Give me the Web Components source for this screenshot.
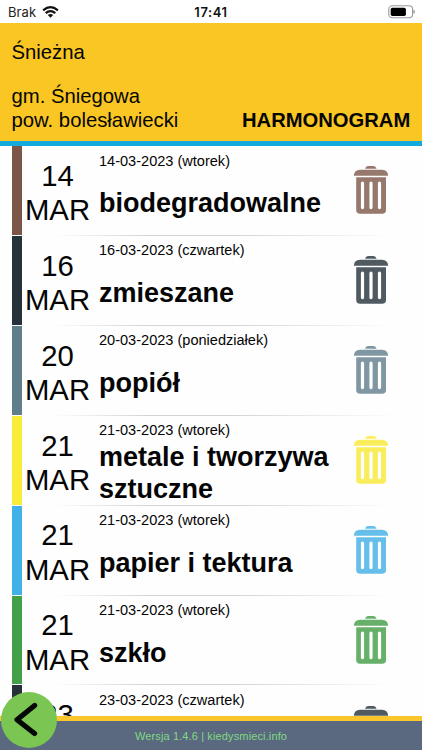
<!DOCTYPE html>
<html lang="pl">
<head>
<meta charset="utf-8">
<title>Harmonogram</title>
<style>
html,body{margin:0;height:100%;overflow:hidden;background:#fefefe;color:#050505;font-family:"Liberation Sans",Arial,sans-serif}
</style>
</head>
<body>
<schedule-app></schedule-app>
<script>
const define = (name, html, setup) => customElements.define(name, class extends HTMLElement {
  connectedCallback() {
    if (this.shadowRoot) return;
    const root = this.attachShadow({mode: 'open'});
    const t = document.createElement('template');
    t.innerHTML = html;
    root.append(t.content.cloneNode(true));
    if (setup) setup(this, root);
  }
});

define('status-bar', `
<style>
:host{display:grid;grid-template-columns:1fr auto 1fr;align-items:center;height:23px;box-sizing:border-box;padding:1px 7px 0 8px;background:#fff;font-family:Inter,sans-serif;font-size:13px;color:#222}
.net{display:flex;align-items:center;gap:6px;letter-spacing:.1px}
.time{font-weight:600;color:#111;letter-spacing:.6px;margin-left:-1px}
.bat{justify-self:end;display:flex}
svg{display:block}
.net svg{margin-left:-.5px}
</style>
<div class="net"><span>Brak</span><svg width="17" height="12" viewBox="0 0 17 12" fill="none" stroke="#111" stroke-width="2.2"><path d="M1.1 4.3Q8.5-1.9 15.9 4.3M3.7 7.1Q8.5 3 13.3 7.1"/><path d="M5.8 8.9Q8.5 6.9 11.2 8.9L8.5 11.7Z" fill="#111" stroke="none"/></svg></div>
<span class="time">17:41</span>
<div class="bat"><svg width="27" height="14" viewBox="0 0 27 14"><rect x=".8" y=".8" width="23.8" height="11.9" rx="3.5" fill="#fff" stroke="#999" stroke-width="1.1"/><rect x="2.7" y="2.7" width="15.2" height="8.2" rx="1.7" fill="#000"/><path d="M25.4 4.8Q27 5.3 27 6.8T25.4 8.8Z" fill="#999"/></svg></div>`);

define('page-header', `
<style>
:host{display:flex;flex-direction:column;justify-content:space-between;height:123px;box-sizing:border-box;padding:18px 11.8px 9px 11.5px;background:#fac623;border-bottom:5px solid #14aadb;font-size:20.3px;line-height:23.5px;flex:none}
.bottom{display:flex;justify-content:space-between;align-items:flex-end}
b{font-size:20.2px}
</style>
<div><slot name="street"></slot></div>
<div class="bottom"><div><slot name="commune"></slot><br><slot name="county"></slot></div><b><slot name="title"></slot></b></div>`);

define('bin-icon', `
<style>:host{display:block;width:36px;height:50px}svg{display:block}</style>
<svg width="36" height="50" viewBox="0 0 36 50" fill="currentColor">
<path d="M12 3.8Q12.8.9 15 .9H20.6Q22.8.9 23.6 3.8Z"/>
<path d="M.8 10.8Q1.2 4.8 7 4.8H29Q34.8 4.8 35.2 10.8Z"/>
<path fill-rule="evenodd" d="M3.2 12.2H33V45Q33 48.8 29 48.8H7.2Q3.2 48.8 3.2 45ZM7.9 18.2V42.6a1.6 1.6 0 0 0 3.2 0V18.2a1.6 1.6 0 0 0-3.2 0ZM16.4 18.2V42.6a1.6 1.6 0 0 0 3.2 0V18.2a1.6 1.6 0 0 0-3.2 0ZM24.9 18.2V42.6a1.6 1.6 0 0 0 3.2 0V18.2a1.6 1.6 0 0 0-3.2 0Z"/>
</svg>`);

define('pickup-row', `
<style>
:host{display:grid;grid-template-columns:10px 72px minmax(0,1fr) 36px;grid-template-rows:100%;height:89.85px;flex:none;box-sizing:border-box;padding:0 33px 0 11.5px;background:linear-gradient(90deg,transparent 12%,#d4d4d4 35%,#d4d4d4 55%,transparent 94%) bottom/100% 1px no-repeat}
.bar{background:var(--bar);margin-bottom:1px}
.day{text-align:center;font-size:29.3px;line-height:34.5px;padding-top:12.7px}
.info{display:flex;flex-direction:column;min-width:0;padding:6.3px 0 0 5.5px}
.date{font-size:14.55px;line-height:17px}
.name{flex:none;height:68px;display:flex;align-items:center;font-weight:700;font-size:27px;line-height:32.5px}
bin-icon{margin-top:19.2px;color:var(--bin)}
</style>
<div class="bar"></div><div class="day"><span class="d"></span><br>MAR</div>
<div class="info"><div class="date"></div><div class="name"><span><slot></slot></span></div></div>
<bin-icon></bin-icon>`, (el, root) => {
  const date = el.getAttribute('date');
  root.querySelector('.d').textContent = date.slice(0, 2);
  root.querySelector('.date').textContent = date + ' (' + el.getAttribute('weekday') + ')';
  el.style.setProperty('--bar', el.getAttribute('bar'));
  el.style.setProperty('--bin', el.getAttribute('bin'));
});

define('page-footer', `
<style>
:host{display:flex;align-items:center;justify-content:center;height:34px;flex:none;box-sizing:border-box;border-top:5px solid #fac62b;background:#5a697f;color:#81d982;font-size:11px;letter-spacing:.13px}
</style><slot></slot>`);

define('back-button', `
<style>:host{display:block;width:56px;height:56px;border-radius:50%;background:#7bc653}svg{display:block}</style>
<svg width="56" height="56" viewBox="0 0 56 56" fill="none" stroke="#050805" stroke-width="5.2" stroke-linecap="round" stroke-linejoin="round"><path d="M33.6 13.5L16 27.7L33.6 41.5"/></svg>`);

define('schedule-app', `
<style>
:host{display:flex;flex-direction:column;height:750px;width:422px;position:relative;overflow:hidden}
status-bar{flex:none}
main{flex:1;min-height:0;overflow:hidden;display:flex;flex-direction:column;padding-top:.3px;box-sizing:border-box}
back-button{position:absolute;left:.5px;top:691.5px}
</style>
<status-bar></status-bar>
<page-header><span slot="street">Śnieżna</span><span slot="commune">gm. Śniegowa</span><span slot="county">pow. bolesławiecki</span><span slot="title">HARMONOGRAM</span></page-header>
<main>
<pickup-row date="14-03-2023" weekday="wtorek" bar="#7b5548" bin="#96786d">biodegradowalne</pickup-row>
<pickup-row date="16-03-2023" weekday="czwartek" bar="#26323a" bin="#505a61">zmieszane</pickup-row>
<pickup-row date="20-03-2023" weekday="poniedziałek" bar="#607d8b" bin="#8097a3">popiół</pickup-row>
<pickup-row date="21-03-2023" weekday="wtorek" bar="#faeb36" bin="#faed5b">metale i tworzywa sztuczne</pickup-row>
<pickup-row date="21-03-2023" weekday="wtorek" bar="#40b2e8" bin="#65bfea">papier i tektura</pickup-row>
<pickup-row date="21-03-2023" weekday="wtorek" bar="#42a148" bin="#66b069">szkło</pickup-row>
<pickup-row date="23-03-2023" weekday="czwartek" bar="#26323a" bin="#505a61"></pickup-row>
</main>
<page-footer>Wersja 1.4.6 | kiedysmieci.info</page-footer>
<back-button></back-button>`);
</script>
</body>
</html>
